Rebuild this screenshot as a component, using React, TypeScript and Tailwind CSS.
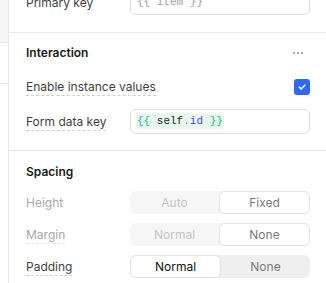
const font = { fontFamily: "Inter, 'Noto Sans', sans-serif" };

function Dashed({ children, muted }: { children: React.ReactNode; muted?: boolean }) {
  return (
    <span
      className={`border-b border-dashed pb-[1px] ${
        muted ? "border-[#e3e3e3] text-[#a8a8a8]" : "border-[#cfcfcf] text-[#3f3f3f]"
      }`}
    >
      {children}
    </span>
  );
}

function Row({ label, children }: { label: React.ReactNode; children: React.ReactNode }) {
  return (
    <div className="flex items-center">
      <div className="w-[104px] shrink-0 text-[12px] leading-5">{label}</div>
      <div className="flex-1">{children}</div>
    </div>
  );
}

type SegProps = { options: string[]; active: number; disabled?: boolean };

function Segmented({ options, active, disabled }: SegProps) {
  return (
    <div
      className={`flex h-[23px] rounded-[6px] ${disabled ? "bg-[#f6f6f6]" : "bg-[#efefef]"}`}
    >
      {options.map((o, i) => {
        const on = i === active;
        let color = "text-[#7a7a7a]";
        if (disabled) color = on ? "text-[#7a7a7a]" : "text-[#c4c4c4]";
        else if (on) color = "text-[#111111]";
        return (
          <div
            key={o}
            className={`flex flex-1 items-center justify-center rounded-[6px] text-[12px] ${color} ${
              on ? "border border-[#e2e2e2] bg-white" : ""
            }`}
          >
            {o}
          </div>
        );
      })}
    </div>
  );
}

export default function App() {
  return (
    <div className="flex h-[283px] w-[326px] overflow-hidden bg-white" style={font}>
      <div className="w-[9px] shrink-0 border-r border-[#e8e8e8]">
        <div className="h-[43px] border-b border-[#e6e6e6] bg-[#f5f5f5]" />
        <div className="h-[41px] border-b border-[#e6e6e6]" />
      </div>

      <div className="flex-1 -mt-[10px]">
        <div className="border-b border-[#e8e8e8] pb-[17px] pl-[17px] pr-4">
          <Row label={<span className="text-[#3f3f3f]">Primary key</span>}>
            <div className="flex h-[25px] items-center rounded-[6px] border border-[#dcdcdc] px-[6px] font-mono text-[11px] text-[#a0a0a0]">
              {"{{ item }}"}
            </div>
          </Row>
        </div>

        <div className="border-b border-[#e8e8e8] pb-4 pl-[17px] pr-4 pt-[10px]">
          <div className="flex h-5 items-center justify-between">
            <span className="text-[12px] font-semibold text-[#1a1a1a]">Interaction</span>
            <svg width="12" height="4" viewBox="0 0 12 4" className="mr-[6px]">
              <circle cx="2" cy="2" r="1" fill="#8f8f8f" />
              <circle cx="6" cy="2" r="1" fill="#8f8f8f" />
              <circle cx="10" cy="2" r="1" fill="#8f8f8f" />
            </svg>
          </div>

          <div className="mt-3 flex h-6 items-center justify-between">
            <span className="text-[12px] leading-5">
              <Dashed>Enable instance values</Dashed>
            </span>
            <div className="flex h-4 w-4 items-center justify-center rounded-[3px] bg-[#2f69f0]">
              <svg width="10" height="10" viewBox="0 0 10 10">
                <path
                  d="M2.3 5.2 4.2 7 7.8 3.2"
                  fill="none"
                  stroke="white"
                  strokeWidth="1.6"
                  strokeLinecap="round"
                  strokeLinejoin="round"
                />
              </svg>
            </div>
          </div>

          <div className="mt-[10px]">
            <Row label={<Dashed>Form data key</Dashed>}>
              <div className="flex h-[25px] items-center rounded-[6px] border border-[#dcdcdc] px-[5px]">
                <span className="rounded-[3px] bg-[#e6f8ed] px-[1px] font-mono text-[11px] leading-[15px] text-[#262626]">
                  <span className="text-[#14b88a]">{"{{ "}</span>
                  self<span className="text-[#d9731f]">.</span>
                  <span className="text-[#4f46e5]">id</span>
                  <span className="text-[#14b88a]">{" }}"}</span>
                </span>
              </div>
            </Row>
          </div>
        </div>

        <div className="pl-[17px] pr-4 pt-[11px]">
          <div className="flex h-5 items-center">
            <span className="text-[12px] font-semibold text-[#1a1a1a]">Spacing</span>
          </div>
          <div className="mt-[9px] flex flex-col gap-[9px]">
            <Row label={<span className="text-[#a8a8a8]">Height</span>}>
              <Segmented options={["Auto", "Fixed"]} active={1} disabled />
            </Row>
            <Row label={<Dashed muted>Margin</Dashed>}>
              <Segmented options={["Normal", "None"]} active={1} disabled />
            </Row>
            <Row label={<Dashed>Padding</Dashed>}>
              <Segmented options={["Normal", "None"]} active={0} />
            </Row>
          </div>
        </div>
      </div>
    </div>
  );
}
